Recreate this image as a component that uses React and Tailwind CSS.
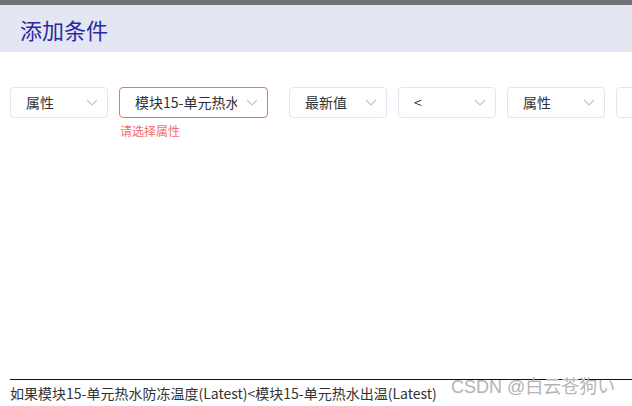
const Chevron = () => (
  <svg width="12" height="7" viewBox="0 0 12 7" fill="none" className="shrink-0">
    <path d="M1 1l5 5 5-5" stroke="#c0c4cc" strokeWidth="1.1" />
  </svg>
);

const Select = ({ value, width, error }) => (
  <div
    className={`h-[31px] ${width} shrink-0 flex items-center justify-between gap-[9px] rounded-[4px] border bg-white pl-[15px] pr-[9px] ${
      error ? "border-[#f56c6c]" : "border-[#e4e5ef]"
    }`}
  >
    <span className="text-[14px] text-[#303133] whitespace-nowrap overflow-hidden">{value}</span>
    <Chevron />
  </div>
);

export default function App() {
  const font = { fontFamily: '"Noto Sans CJK SC", "Noto Sans", sans-serif' };
  return (
    <div className="relative h-[406px] w-[632px] overflow-hidden bg-white flex flex-col" style={font}>
      <div className="h-[5px] bg-[#737178]" />
      <div className="h-[47px] bg-[#e4e6f3] flex items-center pl-[20px]">
        <h1 className="text-[22px] text-[#2a2a9c] leading-none">添加条件</h1>
      </div>

      <div className="flex-1 pt-[35px] pl-[10px]">
        <div className="flex items-start gap-[11px] whitespace-nowrap">
          <Select value="属性" width="w-[98px]" />
          <div className="flex flex-col shrink-0 mr-[10px]">
            <Select value="模块15-单元热水防冻温度" width="w-[149px]" error />
            <span className="mt-[5px] pl-[1px] text-[12px] leading-[16px] text-[#f56c6c]">请选择属性</span>
          </div>
          <Select value="最新值" width="w-[98px]" />
          <Select value="<" width="w-[98px]" />
          <Select value="属性" width="w-[98px]" />
          <Select value="属性" width="w-[98px]" />
        </div>
      </div>

      <div className="ml-[10px] border-t border-[#111] h-[27px]">
        <span className="text-[14px] text-[#333] leading-[20px]">
          如果模块15-单元热水防冻温度(Latest)&lt;模块15-单元热水出温(Latest)
        </span>
      </div>

      <div
        className="absolute left-[451px] bottom-[9px] text-[18px] text-[#b4b4b4] leading-[20px]"
        style={{ fontFamily: '"Liberation Sans", "Noto Sans CJK SC", sans-serif' }}
      >
        CSDN @白云苍狗い
      </div>
    </div>
  );
}
